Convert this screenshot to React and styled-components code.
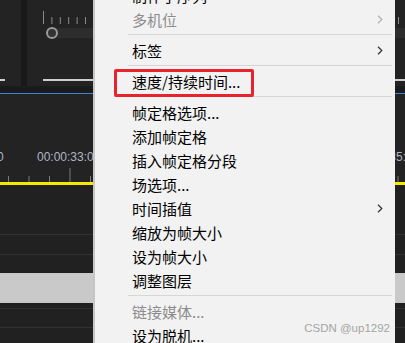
import React from 'react'
import styled, { createGlobalStyle } from 'styled-components';

const Global = createGlobalStyle`
  html, body { margin: 0; padding: 0; background: #222; }
  body { font-family: "Liberation Sans", Arial, sans-serif; }
`;

const Screen = styled.div`
  position: relative;
  width: 405px;
  height: 343px;
  overflow: hidden;
  background: #222222;
`;

/* ---------- timeline behind the menu ---------- */

const Timeline = styled.div`
  display: flex;
  flex-direction: column;
  width: 100%;
  height: 100%;
`;

const TopPanels = styled.div`
  display: flex;
  height: 86px;
  flex-shrink: 0;
`;

const Panel = styled.div`
  display: flex;
  flex-direction: column;
  background: #232323;
  width: ${({w}) => w ? w + 'px' : 'auto'};
  flex: ${({w}) => w ? '0 0 auto' : '1'};
  padding-left: ${({pad}) => pad || 0}px;
`;

const PanelDivider = styled.div`
  width: 6px;
  background: #191919;
`;

const MiniRuler = styled.svg`
  display: block;
  margin-top: 11px;
`;

const SliderTrack = styled.div`
  position: relative;
  height: 10px;
  margin-left: 4px;
  margin-top: 3px;
  background: #2d2d2d;
`;

const Knob = styled.div`
  position: absolute;
  left: -1px;
  top: -1px;
  width: 8px;
  height: 8px;
  border-radius: 50%;
  border: 2px solid #9a9a9a;
  background: #333;
`;

const PanelEdge = styled.div`
  margin-top: auto;
  margin-bottom: 5px;
  height: 1px;
  width: ${({w}) => w ? w + 'px' : 'auto'};
  margin-left: ${({ml}) => ml || 0}px;
  background: #cfcfcf;
  border-bottom: 1px solid rgba(200,200,200,0.35);
`;

const Gutter = styled.div`
  height: 7px;
  background: #1b1b1b;
  flex-shrink: 0;
`;

const BlueLine = styled.div`
  height: 1px;
  background: #3d82d6;
  flex-shrink: 0;
`;

const Ruler = styled.div`
  position: relative;
  height: 88px;
  flex-shrink: 0;
  background: #232323;
`;

const TimeLabel = styled.span`
  position: absolute;
  top: 56px;
  font-family: "Liberation Sans", Arial, sans-serif;
  font-size: 12px;
  line-height: 14px;
  color: #aeb6c4;
  white-space: nowrap;
`;

const RulerTicks = styled.svg`
  position: absolute;
  left: 0;
  bottom: 0;
`;

const Playhead = styled.div`
  height: 3px;
  background: #f7ea00;
  flex-shrink: 0;
`;

const Tracks = styled.div`
  flex: 1;
  display: flex;
  flex-direction: column;
  background: #212121;
`;

const TrackGap = styled.div`
  height: ${({h}) => h}px;
  flex-shrink: 0;
`;

const TrackLine = styled.div`
  height: 1px;
  background: #323232;
  flex-shrink: 0;
`;

const Clip = styled.div`
  height: 30px;
  background: #c9c9c9;
  flex-shrink: 0;
`;

/* ---------- context menu ---------- */

const Menu = styled.div`
  position: absolute;
  left: 93px;
  top: -17px;
  width: 300px;
  bottom: 0;
  background: #f2f2f2;
  border-left: 2px solid #c6c6c6;
  display: flex;
  flex-direction: column;
`;

const Item = styled.div`
  position: relative;
  display: flex;
  align-items: center;
  height: 24px;
  flex-shrink: 0;
  padding-left: 37px;
  padding-right: 12px;
  font-family: "Noto Sans CJK SC", "Liberation Sans", sans-serif;
  font-size: 15px;
  color: ${({disabled}) => disabled ? '#8c8c8c' : '#000'};
`;

const Label = styled.span`
  flex: 1;
  white-space: nowrap;
`;

const Separator = styled.div`
  height: 1px;
  margin: 3px 3px 3px 33px;
  background: #d6d6d6;
  flex-shrink: 0;
`;

const Highlight = styled.div`
  position: absolute;
  left: 19px;
  top: 0;
  width: 134px;
  height: 22px;
  border: 3px solid #e8232b;
  border-radius: 2px;
`;

const Watermark = styled.span`
  position: absolute;
  right: 15px;
  top: 321px;
  font-family: "Liberation Sans", Arial, sans-serif;
  font-size: 11.5px;
  line-height: 14px;
  color: #a4a4a4;
`;

const Chevron = ({disabled}) => (
  <svg width="6" height="9" viewBox="0 0 6 9">
    <polyline points="1,0.8 4.8,4.5 1,8.2" fill="none"
      stroke={disabled ? '#b0b0b0' : '#333'} strokeWidth="1.2" />
  </svg>
);

const menu = [
  { label: '制作子序列' },
  { label: '多机位', disabled: true, sub: true },
  'sep',
  { label: '标签', sub: true },
  'sep',
  { label: '速度/持续时间...', marked: true },
  'sep',
  { label: '帧定格选项...' },
  { label: '添加帧定格' },
  { label: '插入帧定格分段' },
  { label: '场选项...' },
  { label: '时间插值', sub: true },
  { label: '缩放为帧大小' },
  { label: '设为帧大小' },
  { label: '调整图层' },
  'sep',
  { label: '链接媒体...', disabled: true },
  { label: '设为脱机...' },
];

function App() {
  const smallTicks = [43, 51.4, 59.8, 68.2, 76.6, 85, 93.4, 398];
  const rulerTicks = [];
  for (let i = 0; i < 20; i++) rulerTicks.push(8 + i * 20.5);

  return (
    <Screen>
      <Global />
      <Timeline>
        <TopPanels>
          <Panel w={21}>
            <PanelEdge w={5} />
          </Panel>
          <PanelDivider />
          <Panel pad={16}>
            <MiniRuler width="362" height="14">
              {smallTicks.map((x, i) => (
                <line key={i} x1={x - 42.5} x2={x - 42.5} y1={i === 0 ? 0 : 6} y2="13"
                  stroke="#8a8a8a" strokeWidth="1" />
              ))}
            </MiniRuler>
            <SliderTrack>
              <Knob />
            </SliderTrack>
            <PanelEdge />
          </Panel>
        </TopPanels>
        <Gutter />
        <BlueLine />
        <Ruler>
          <TimeLabel style={{ left: -53 }}>00:00:32:0</TimeLabel>
          <TimeLabel style={{ left: 37 }}>00:00:33:0</TimeLabel>
          <TimeLabel style={{ left: 356 }}>00:00:35:0</TimeLabel>
          <RulerTicks width="405" height="14">
            {rulerTicks.map((x, i) => (
              <line key={i} x1={x + 0.5} x2={x + 0.5} y1={i === 3 ? 0 : 8} y2="14"
                stroke="#7a7a7a" strokeWidth="1" />
            ))}
          </RulerTicks>
        </Ruler>
        <Playhead />
        <Tracks>
          <TrackGap h={49} />
          <TrackLine />
          <TrackGap h={19} />
          <TrackLine />
          <TrackGap h={18} />
          <Clip />
          <TrackGap h={5} />
          <TrackLine />
          <TrackGap h={18} />
          <TrackLine />
        </Tracks>
      </Timeline>

      <Menu>
        {menu.map((m, i) =>
          m === 'sep' ? <Separator key={i} /> : (
            <Item key={i} disabled={m.disabled}>
              {m.marked && <Highlight />}
              <Label>{m.label}</Label>
              {m.sub && <Chevron disabled={m.disabled} />}
            </Item>
          )
        )}
      </Menu>
      <Watermark>CSDN @up1292</Watermark>
    </Screen>
  );
}

export default App
